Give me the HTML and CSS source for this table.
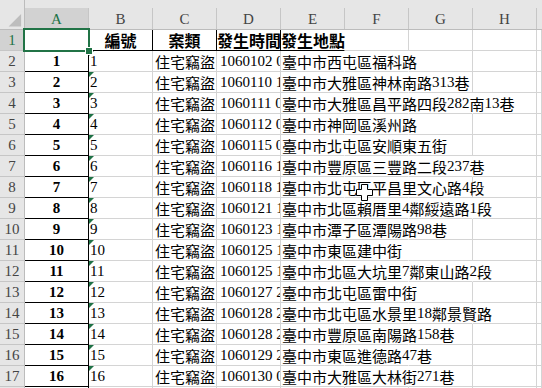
FILE: index.html
```html
<!DOCTYPE html>
<html lang="zh-Hant">
<head>
<meta charset="utf-8">
<link rel="stylesheet" href="styles.css">
</head>
<body>
<div class="sheet">
  <div class="row hdr">
    <div class="corner"><svg width="25" height="29" viewBox="0 0 25 29"><polygon points="22,14 22,27 9,27" fill="#bdbdbd"/></svg></div>
    <div class="ch sel">A</div><div class="ch">B</div><div class="ch">C</div><div class="ch">D</div><div class="ch">E</div><div class="ch">F</div><div class="ch">G</div><div class="ch">H</div><div class="ch last"></div>
  </div>
  <div class="row r1">
    <div class="rh sel">1</div>
    <div class="c a a1"></div>
    <div class="c t ctr">編號</div>
    <div class="c t ctr">案類</div>
    <div class="c t">發生時間</div>
    <div class="c t tl">發生地點</div>
    <div class="c"></div><div class="c"></div><div class="c"></div><div class="c"></div>
  </div>
  <div class="row s2"><div class="rh">2</div><div class="c a">1</div><div class="c b"><i class="tri"></i>1</div><div class="c k">住宅竊盜</div><div class="c d">1060102 0800</div><div class="c e">臺中市西屯區福科路</div><div class="c f"></div><div class="c g"></div><div class="c h"></div><div class="c"></div></div>
  <div class="row s2"><div class="rh">3</div><div class="c a">2</div><div class="c b"><i class="tri"></i>2</div><div class="c k">住宅竊盜</div><div class="c d">1060110 1400</div><div class="c e">臺中市大雅區神林南路<span class="n">313</span>巷</div><div class="c f"></div><div class="c g"></div><div class="c h"></div><div class="c"></div></div>
  <div class="row s3"><div class="rh">4</div><div class="c a">3</div><div class="c b"><i class="tri"></i>3</div><div class="c k">住宅竊盜</div><div class="c d">1060111 0900</div><div class="c e">臺中市大雅區昌平路四段<span class="n">282</span>南<span class="n">13</span>巷</div><div class="c f"></div><div class="c g"></div><div class="c h"></div><div class="c"></div></div>
  <div class="row s2"><div class="rh">5</div><div class="c a">4</div><div class="c b"><i class="tri"></i>4</div><div class="c k">住宅竊盜</div><div class="c d">1060112 0800</div><div class="c e">臺中市神岡區溪州路</div><div class="c f"></div><div class="c g"></div><div class="c h"></div><div class="c"></div></div>
  <div class="row s2"><div class="rh">6</div><div class="c a">5</div><div class="c b"><i class="tri"></i>5</div><div class="c k">住宅竊盜</div><div class="c d">1060115 0700</div><div class="c e">臺中市北屯區安順東五街</div><div class="c f"></div><div class="c g"></div><div class="c h"></div><div class="c"></div></div>
  <div class="row s3"><div class="rh">7</div><div class="c a">6</div><div class="c b"><i class="tri"></i>6</div><div class="c k">住宅竊盜</div><div class="c d">1060116 1000</div><div class="c e">臺中市豐原區三豐路二段<span class="n">237</span>巷</div><div class="c f"></div><div class="c g"></div><div class="c h"></div><div class="c"></div></div>
  <div class="row s2"><div class="rh">8</div><div class="c a">7</div><div class="c b"><i class="tri"></i>7</div><div class="c k">住宅竊盜</div><div class="c d">1060118 1200</div><div class="c e">臺中市北屯區平昌里文心路<span class="n">4</span>段</div><div class="c f"></div><div class="c g"></div><div class="c h"></div><div class="c"></div></div>
  <div class="row s3"><div class="rh">9</div><div class="c a">8</div><div class="c b"><i class="tri"></i>8</div><div class="c k">住宅竊盜</div><div class="c d">1060121 1500</div><div class="c e">臺中市北區賴厝里<span class="n">4</span>鄰綏遠路<span class="n">1</span>段</div><div class="c f"></div><div class="c g"></div><div class="c h"></div><div class="c"></div></div>
  <div class="row s2"><div class="rh">10</div><div class="c a">9</div><div class="c b"><i class="tri"></i>9</div><div class="c k">住宅竊盜</div><div class="c d">1060123 1100</div><div class="c e">臺中市潭子區潭陽路<span class="n">98</span>巷</div><div class="c f"></div><div class="c g"></div><div class="c h"></div><div class="c"></div></div>
  <div class="row s2"><div class="rh">11</div><div class="c a">10</div><div class="c b"><i class="tri"></i>10</div><div class="c k">住宅竊盜</div><div class="c d">1060125 1300</div><div class="c e">臺中市東區建中街</div><div class="c f"></div><div class="c g"></div><div class="c h"></div><div class="c"></div></div>
  <div class="row s3"><div class="rh">12</div><div class="c a">11</div><div class="c b"><i class="tri"></i>11</div><div class="c k">住宅竊盜</div><div class="c d">1060125 1600</div><div class="c e">臺中市北區大坑里<span class="n">7</span>鄰東山路<span class="n">2</span>段</div><div class="c f"></div><div class="c g"></div><div class="c h"></div><div class="c"></div></div>
  <div class="row s2"><div class="rh">13</div><div class="c a">12</div><div class="c b"><i class="tri"></i>12</div><div class="c k">住宅竊盜</div><div class="c d">1060127 2000</div><div class="c e">臺中市北屯區雷中街</div><div class="c f"></div><div class="c g"></div><div class="c h"></div><div class="c"></div></div>
  <div class="row s3"><div class="rh">14</div><div class="c a">13</div><div class="c b"><i class="tri"></i>13</div><div class="c k">住宅竊盜</div><div class="c d">1060128 2100</div><div class="c e">臺中市北屯區水景里<span class="n">18</span>鄰景賢路</div><div class="c f"></div><div class="c g"></div><div class="c h"></div><div class="c"></div></div>
  <div class="row s2"><div class="rh">15</div><div class="c a">14</div><div class="c b"><i class="tri"></i>14</div><div class="c k">住宅竊盜</div><div class="c d">1060128 2200</div><div class="c e">臺中市豐原區南陽路<span class="n">158</span>巷</div><div class="c f"></div><div class="c g"></div><div class="c h"></div><div class="c"></div></div>
  <div class="row s2"><div class="rh">16</div><div class="c a">15</div><div class="c b"><i class="tri"></i>15</div><div class="c k">住宅竊盜</div><div class="c d">1060129 2300</div><div class="c e">臺中市東區進德路<span class="n">47</span>巷</div><div class="c f"></div><div class="c g"></div><div class="c h"></div><div class="c"></div></div>
  <div class="row s2"><div class="rh">17</div><div class="c a">16</div><div class="c b"><i class="tri"></i>16</div><div class="c k">住宅竊盜</div><div class="c d">1060130 0100</div><div class="c e">臺中市大雅區大林街<span class="n">271</span>巷</div><div class="c f"></div><div class="c g"></div><div class="c h"></div><div class="c"></div></div>
  <div class="row"><div class="rh">18</div><div class="c a"></div><div class="c"></div><div class="c"></div><div class="c"></div><div class="c"></div><div class="c"></div><div class="c"></div><div class="c"></div><div class="c"></div></div>
  <svg class="cursor" width="17" height="17" viewBox="0 0 17 17"><path d="M5.5 0.5h6v5h5v6h-5v5h-6v-5h-5v-6h5z" fill="#fff" stroke="#000" stroke-width="1"/></svg>
</div>
</body>
</html>
```

FILE: styles.css
```css
html, body {
  margin: 0;
  padding: 0;
  background: #fff;
}

.sheet {
  position: relative;
  width: 542px;
  height: 388px;
  overflow: hidden;
  font-family: "Liberation Serif", "Noto Sans CJK TC", serif;
  color: #000;
}

.row {
  display: grid;
  grid-template-columns: 25px repeat(8, 64px) 1fr;
  height: 21px;
}

.row.hdr {
  height: 30px;
  background: #e6e6e6;
  border-bottom: 1px solid #bcbcbc;
  box-sizing: border-box;
}

.corner {
  border-right: 1px solid #bcbcbc;
  box-sizing: border-box;
  display: flex;
}

.ch {
  margin-top: 8px;
  border-right: 1px solid #c6c6c6;
  box-sizing: border-box;
  display: flex;
  align-items: center;
  justify-content: center;
  font-size: 15px;
  color: #444;
  padding-top: 1px;
}

.ch.sel {
  background: #d2d2d2;
  color: #217346;
}

.ch.last {
  border-right: none;
}

.rh {
  background: #e6e6e6;
  border-right: 1px solid #bcbcbc;
  border-bottom: 1px solid #c6c6c6;
  box-sizing: border-box;
  display: flex;
  align-items: flex-end;
  justify-content: center;
  font-size: 15px;
  line-height: 19px;
  color: #444;
}

.rh.sel {
  background: #d2d2d2;
  color: #217346;
}

.c {
  position: relative;
  border-right: 1px solid #d4d4d4;
  border-bottom: 1px solid #d4d4d4;
  box-sizing: border-box;
  white-space: nowrap;
  display: flex;
  align-items: flex-end;
  padding: 0 0 0 2px;
  font-size: 15px;
  line-height: 19px;
}

.c.a {
  border-right-color: #000;
  border-bottom-color: #000;
  justify-content: center;
  font-weight: bold;
  padding: 0;
}

.a1::after {
  content: "";
  position: absolute;
  left: -2px;
  top: -2px;
  right: -2px;
  bottom: -2px;
  border: 2px solid #217346;
  z-index: 2;
}

.a1::before {
  content: "";
  position: absolute;
  right: -5px;
  bottom: -5px;
  width: 6px;
  height: 6px;
  background: #217346;
  border: 1px solid #fff;
  z-index: 3;
}

.c.t {
  font-weight: bold;
  font-size: 16px;
  border-right-color: #000;
  border-bottom-color: #000;
  font-family: "Noto Sans CJK TC", sans-serif;
  padding-left: 0;
}

.c.t.ctr {
  justify-content: center;
  padding: 0;
}

.c.t.tl {
  border-right-color: #fff;
}

.c.b {
  padding-left: 1px;
}

.tri {
  position: absolute;
  left: 0;
  top: 0;
  width: 0;
  height: 0;
  border-top: 5px solid #1e7145;
  border-right: 5px solid transparent;
}

.c.k {
  font-family: "Noto Sans CJK TC", sans-serif;
  padding-left: 2px;
}

.c.d {
  padding-left: 3px;
  overflow: hidden;
}

.c.e {
  font-family: "Noto Sans CJK TC", sans-serif;
  padding-left: 1px;
  overflow: visible;
  z-index: 1;
}

.n {
  font-family: "Liberation Serif", serif;
}

.s2 .c.e,
.s2 .c.f,
.s3 .c.e,
.s3 .c.f,
.s3 .c.g {
  border-right-color: #fff;
}

.cursor {
  position: absolute;
  left: 356px;
  top: 184px;
  z-index: 5;
}
```
